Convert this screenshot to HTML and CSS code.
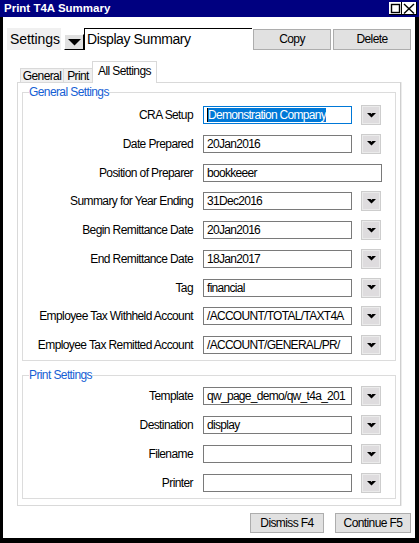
FILE: index.html
```html
<!DOCTYPE html>
<html>
<head>
<meta charset="utf-8">
<title>Print T4A Summary</title>
<link rel="stylesheet" href="styles.css">
</head>
<body>
<div class="window">
  <div class="titlebar">
    <span class="title">Print T4A Summary</span>
    <svg class="tb-icons" width="28" height="13" viewBox="0 0 28 13">
      <rect x="0" y="0" width="28" height="13" fill="#fff"/>
      <rect x="2.5" y="2.5" width="8" height="8" fill="none" stroke="#000" stroke-width="1.4"/>
      <line x1="12.5" y1="0" x2="12.5" y2="13" stroke="#000" stroke-width="1"/>
      <line x1="15" y1="2" x2="25" y2="11.5" stroke="#000" stroke-width="1.4"/>
      <line x1="25" y1="2" x2="15" y2="11.5" stroke="#000" stroke-width="1.4"/>
      <line x1="0" y1="12.5" x2="28" y2="12.5" stroke="#000" stroke-width="1"/>
      <line x1="27.5" y1="0" x2="27.5" y2="13" stroke="#000" stroke-width="1"/>
    </svg>
  </div>
  <div class="frame">
    <div class="settings-row">
      <div class="settings-label">Settings</div>
      <div class="settings-drop">
        <svg width="13" height="7" viewBox="0 0 13 7"><polygon points="0,0 13,0 6.5,6.5" fill="#000"/></svg>
      </div>
      <div class="settings-input">Display Summary</div>
      <button class="btn copy">Copy</button>
      <button class="btn delete">Delete</button>
    </div>

    <div class="tabs">
      <div class="tab tab-general">General</div>
      <div class="tab tab-print">Print</div>
      <div class="tab tab-active">All Settings</div>
    </div>

    <div class="panel">
      <fieldset class="group group-general">
        <legend>General Settings</legend>
        <div class="rows">
          <div class="row"><span class="label">CRA Setup</span><div class="field focus"><span class="sel">Demonstration Company</span></div><div class="drop"><svg width="9" height="5" viewBox="0 0 9 5"><polygon points="0,0 3.6,0 4.5,1 5.4,0 9,0 4.5,4.6" fill="#000"/></svg></div></div>
          <div class="row"><span class="label">Date Prepared</span><div class="field">20Jan2016</div><div class="drop"><svg width="9" height="5" viewBox="0 0 9 5"><polygon points="0,0 3.6,0 4.5,1 5.4,0 9,0 4.5,4.6" fill="#000"/></svg></div></div>
          <div class="row"><span class="label">Position of Preparer</span><div class="field wide">bookkeeer</div></div>
          <div class="row"><span class="label">Summary for Year Ending</span><div class="field">31Dec2016</div><div class="drop"><svg width="9" height="5" viewBox="0 0 9 5"><polygon points="0,0 3.6,0 4.5,1 5.4,0 9,0 4.5,4.6" fill="#000"/></svg></div></div>
          <div class="row"><span class="label">Begin Remittance Date</span><div class="field">20Jan2016</div><div class="drop"><svg width="9" height="5" viewBox="0 0 9 5"><polygon points="0,0 3.6,0 4.5,1 5.4,0 9,0 4.5,4.6" fill="#000"/></svg></div></div>
          <div class="row"><span class="label">End Remittance Date</span><div class="field">18Jan2017</div><div class="drop"><svg width="9" height="5" viewBox="0 0 9 5"><polygon points="0,0 3.6,0 4.5,1 5.4,0 9,0 4.5,4.6" fill="#000"/></svg></div></div>
          <div class="row"><span class="label">Tag</span><div class="field">financial</div><div class="drop"><svg width="9" height="5" viewBox="0 0 9 5"><polygon points="0,0 3.6,0 4.5,1 5.4,0 9,0 4.5,4.6" fill="#000"/></svg></div></div>
          <div class="row"><span class="label">Employee Tax Withheld Account</span><div class="field">/ACCOUNT/TOTAL/TAXT4A</div><div class="drop"><svg width="9" height="5" viewBox="0 0 9 5"><polygon points="0,0 3.6,0 4.5,1 5.4,0 9,0 4.5,4.6" fill="#000"/></svg></div></div>
          <div class="row"><span class="label">Employee Tax Remitted Account</span><div class="field">/ACCOUNT/GENERAL/PR/</div><div class="drop"><svg width="9" height="5" viewBox="0 0 9 5"><polygon points="0,0 3.6,0 4.5,1 5.4,0 9,0 4.5,4.6" fill="#000"/></svg></div></div>
        </div>
      </fieldset>

      <fieldset class="group group-print">
        <legend>Print Settings</legend>
        <div class="rows rows-print">
          <div class="row"><span class="label">Template</span><div class="field">qw_page_demo/qw_t4a_201</div><div class="drop"><svg width="9" height="5" viewBox="0 0 9 5"><polygon points="0,0 3.6,0 4.5,1 5.4,0 9,0 4.5,4.6" fill="#000"/></svg></div></div>
          <div class="row"><span class="label">Destination</span><div class="field">display</div><div class="drop"><svg width="9" height="5" viewBox="0 0 9 5"><polygon points="0,0 3.6,0 4.5,1 5.4,0 9,0 4.5,4.6" fill="#000"/></svg></div></div>
          <div class="row"><span class="label">Filename</span><div class="field"></div><div class="drop"><svg width="9" height="5" viewBox="0 0 9 5"><polygon points="0,0 3.6,0 4.5,1 5.4,0 9,0 4.5,4.6" fill="#000"/></svg></div></div>
          <div class="row"><span class="label">Printer</span><div class="field"></div><div class="drop"><svg width="9" height="5" viewBox="0 0 9 5"><polygon points="0,0 3.6,0 4.5,1 5.4,0 9,0 4.5,4.6" fill="#000"/></svg></div></div>
        </div>
      </fieldset>
    </div>

    <div class="footer">
      <button class="btn dismiss">Dismiss F4</button>
      <button class="btn continue">Continue F5</button>
    </div>
  </div>
</div>
</body>
</html>
```

FILE: styles.css
```css
* { box-sizing: border-box; }
html, body { margin: 0; padding: 0; }
body {
  width: 419px;
  height: 543px;
  overflow: hidden;
  background: #000;
  color: #000;
  font-family: "Liberation Sans", Arial, sans-serif;
  font-size: 12px;
  letter-spacing: -0.6px;
}
.window {
  width: 419px;
  height: 543px;
  display: flex;
  flex-direction: column;
}
.titlebar {
  flex: none;
  height: 17px;
  background: #000080;
  color: #fff;
  display: flex;
  align-items: center;
  justify-content: space-between;
  padding: 0 2px 0 4px;
}
.title {
  font-weight: bold;
  font-size: 11.5px;
  line-height: 17px;
  letter-spacing: 0;
}
.tb-icons { display: block; }

.frame {
  flex: 1;
  display: flex;
  flex-direction: column;
  background: #fff;
  border-style: solid;
  border-color: #000;
  border-width: 0 4px 5px 3px;
  padding: 11px 4px 5px 4px;
}

.settings-row {
  flex: none;
  display: flex;
  align-items: flex-end;
  height: 22px;
}
.settings-label {
  width: 54px;
  height: 22px;
  background: #f0f0f0;
  font-size: 14px;
  letter-spacing: -0.1px;
  line-height: 22px;
  padding-left: 3px;
}
.settings-drop {
  width: 20px;
  height: 16px;
  margin-left: 3px;
  background: #e0e0e0;
  border-style: solid;
  border-width: 1px;
  border-color: #fff #000 #000 #fff;
  display: flex;
  align-items: center;
  justify-content: center;
}
.settings-drop svg { display: block; }
.settings-input {
  width: 168px;
  height: 22px;
  border-top: 1px solid #000;
  border-left: 1px solid #000;
  font-size: 14px;
  letter-spacing: -0.4px;
  line-height: 21px;
  padding-left: 2px;
  white-space: nowrap;
}
.btn {
  height: 21px;
  padding: 0;
  margin: 0;
  background: #e1e1e1;
  border: 1px solid #adadad;
  color: #000;
  font-family: "Liberation Sans", Arial, sans-serif;
  font-size: 12px;
  letter-spacing: -0.6px;
  line-height: 19px;
}
.copy { width: 78px; margin-left: 1px; }
.delete { width: 78px; margin-left: 2px; }

.tabs {
  flex: none;
  display: flex;
  align-items: flex-end;
  height: 22px;
  margin-top: 11px;
  margin-bottom: -1px;
  padding-left: 13px;
}
.tab {
  height: 14px;
  margin-bottom: 1px;
  background: #f0f0f0;
  border: 1px solid #d9d9d9;
  border-bottom: none;
  text-align: center;
  line-height: 15px;
  white-space: nowrap;
}
.tab-general { width: 44px; }
.tab-print { width: 30px; margin-left: -1px; }
.tab-active {
  width: 65px;
  height: 22px;
  margin-left: -1px;
  margin-bottom: 0;
  background: #fff;
  line-height: 15px;
  padding-top: 2px;
  position: relative;
  z-index: 1;
}

.panel {
  flex: 1;
  margin: 0 10px;
  border: 1px solid #d9d9d9;
  border-right-color: #cfcfcf;
  box-shadow: 1px 0 0 #ececec;
  padding: 0 4px 6px 4px;
  display: flex;
  flex-direction: column;
}

.group {
  margin: 3px 0 0 0;
  padding: 0 0 5px 0;
  border: 1px solid #dcdcdc;
  min-width: 0;
}
.group-print { margin-top: 8px; }
.group legend {
  margin-left: 6px;
  padding: 0;
  color: #1560d4;
  font-size: 12px;
  line-height: 13px;
}

.rows {
  display: flex;
  flex-direction: column;
  gap: 8.75px;
  padding-top: 6px;
}
.rows-print {
  gap: 9px;
  padding-top: 4px;
}
.row {
  display: flex;
  align-items: center;
  height: 20px;
}
.label {
  width: 170px;
  text-align: right;
  white-space: nowrap;
}
.field {
  margin-left: 10px;
  width: 149px;
  height: 18px;
  border: 1px solid #7a7a7a;
  padding-left: 3px;
  font-size: 12px;
  letter-spacing: -0.7px;
  line-height: 16px;
  white-space: nowrap;
  overflow: hidden;
  background: #fff;
}
.field.wide { width: 179px; }
.field.focus { border-color: #0078d7; }
.sel {
  display: inline-block;
  background: #0078d7;
  color: #fff;
  line-height: 14px;
  border-left: 1px solid #000;
  vertical-align: top;
  margin-top: 1px;
}
.drop {
  margin-left: 9px;
  width: 20px;
  height: 20px;
  border: 1px solid #cdcdcd;
  background: #dedcde;
  box-shadow: inset 0 0 0 1px #ebebeb;
  display: flex;
  align-items: center;
  justify-content: center;
}
.drop svg { display: block; }

.footer {
  flex: none;
  display: flex;
  justify-content: flex-end;
  gap: 11px;
  margin-top: 7px;
  height: 20px;
}
.footer .btn { height: 20px; line-height: 18px; }
.dismiss { width: 74px; }
.continue { width: 76px; }
```
